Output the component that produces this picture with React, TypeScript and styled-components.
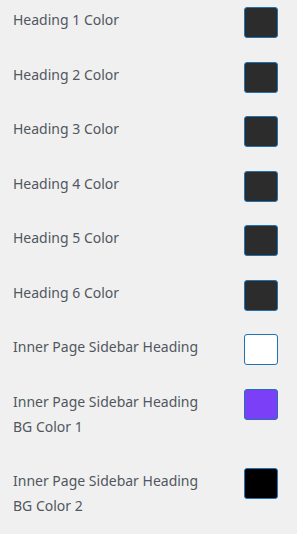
import styled, { createGlobalStyle } from "styled-components"

const GlobalStyle = createGlobalStyle`
  html, body { margin: 0; padding: 0; background: #f0f0f1; }
  body { font-family: "Noto Sans", "Open Sans", sans-serif; }
`

const Panel = styled.div`
  width: 297px; min-height: 534px; box-sizing: border-box;
  padding: 7px 19px 0 13px;
  background: #f0f0f1;
`

const Row = styled.div`
  display: flex; justify-content: space-between; align-items: flex-start;
`

const Label = styled.div`
  width: 200px; padding-bottom: 29.5px;
  font-size: 14px; line-height: 25px; color: #50575e;
`

const Swatch = styled.div<{ $color: string }>`
  width: 34px; height: 31px; box-sizing: border-box;
  border: 1px solid #2271b1; border-radius: 3px;
  background: ${(p) => p.$color};
`

const fields = [
  { label: "Heading 1 Color", color: "#2c2c2c" },
  { label: "Heading 2 Color", color: "#2c2c2c" },
  { label: "Heading 3 Color", color: "#2c2c2c" },
  { label: "Heading 4 Color", color: "#2c2c2c" },
  { label: "Heading 5 Color", color: "#2c2c2c" },
  { label: "Heading 6 Color", color: "#2c2c2c" },
  { label: "Inner Page Sidebar Heading", color: "#ffffff" },
  { label: "Inner Page Sidebar Heading BG Color 1", color: "#7b3ff7" },
  { label: "Inner Page Sidebar Heading BG Color 2", color: "#000000" },
]

const App = () => {
  return (
    <>
      <GlobalStyle />
      <Panel>
        {fields.map((f) => (
          <Row key={f.label}>
            <Label>{f.label}</Label>
            <Swatch $color={f.color} />
          </Row>
        ))}
      </Panel>
    </>
  )
}

export default App
